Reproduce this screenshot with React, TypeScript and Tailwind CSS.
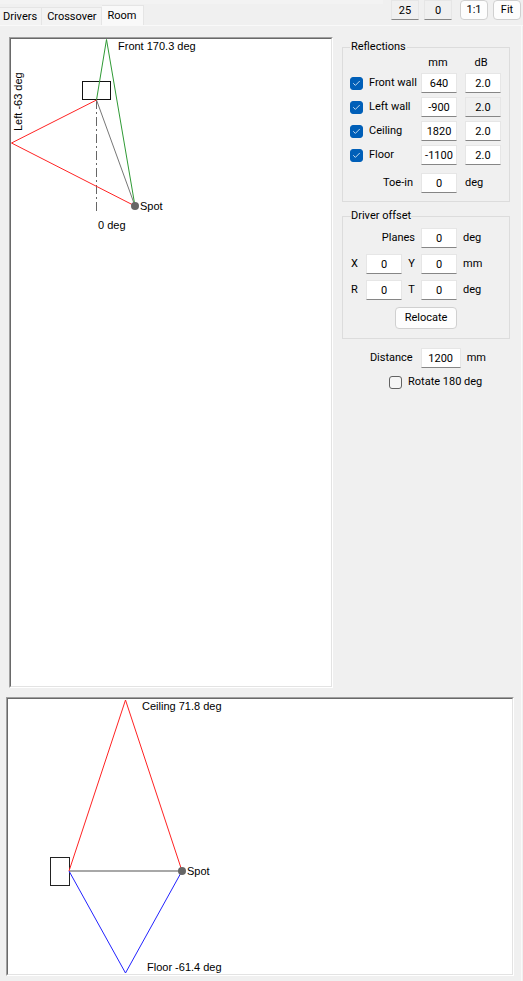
import { useState } from "react";
import { Check } from "lucide-react";
import clsx from "clsx";

type NumberFieldProps = {
  label: string;
  value: string;
  muted?: boolean;
  className?: string;
};

function NumberField({ label, value, muted, className = "w-9" }: NumberFieldProps) {
  return (
    <input
      type="text"
      aria-label={label}
      defaultValue={value}
      className={clsx(
        "h-5 border border-[#e6e6e6] border-b-[#868686] p-0 text-center outline-none",
        muted ? "bg-[#f0f0f0]" : "bg-white",
        className
      )}
    />
  );
}

function CheckField({ label, initial = false }: { label: string; initial?: boolean }) {
  const [checked, setChecked] = useState(initial);

  return (
    <label className="flex items-center gap-[6px] whitespace-nowrap">
      <span className="relative flex">
        <input
          type="checkbox"
          checked={checked}
          onChange={(e) => setChecked(e.target.checked)}
          className="size-[13px] appearance-none rounded-[3px] border border-[#626262] bg-[#f5f5f5] checked:border-[#005fb8] checked:bg-[#005fb8]"
        />
        {checked && (
          <Check className="pointer-events-none absolute inset-0 m-auto size-[9px] text-white" strokeWidth={2} />
        )}
      </span>
      {label}
    </label>
  );
}

const tabs = ["Drivers", "Crossover", "Room"];

const reflections = [
  { name: "Front wall", mm: "640", db: "2.0" },
  { name: "Left wall", mm: "-900", db: "2.0", muted: true },
  { name: "Ceiling", mm: "1820", db: "2.0" },
  { name: "Floor", mm: "-1100", db: "2.0" },
];

const canvasFrame =
  "border border-t-[#a0a0a0] border-l-[#a0a0a0] border-r-white border-b-white";
const canvasInner =
  "border border-t-[#696969] border-l-[#696969] border-r-[#e3e3e3] border-b-[#e3e3e3] bg-white";
const buttonStyle = "rounded-[4px] border border-[#d0d0d0] bg-[#fdfdfd]";

function Header() {
  return (
    <header className="flex h-[26px] items-start border-b border-[#f9f9f9]">
      <div role="tablist" className="flex h-[25px] flex-1 items-end border-t-4 border-[#f3f3f3]">
        {tabs.map((tab) => {
          const active = tab === "Room";
          return (
            <button
              key={tab}
              role="tab"
              aria-selected={active}
              className={clsx(
                "border-t border-r border-[#e5e5e5]",
                active ? "h-5 bg-[#f9f9f9] px-[6px]" : "h-[18px] bg-[#f3f3f3] pr-1 pl-[3px] not-first:pl-[5px]"
              )}
            >
              {tab}
            </button>
          );
        })}
      </div>
      <div className="ml-2 flex pr-[2px]">
        <NumberField label="Zoom" value="25" muted className="w-7" />
        <NumberField label="Offset" value="0" muted className="ml-[5px] w-7" />
        <button className={clsx(buttonStyle, "ml-2 h-5 w-7")}>1:1</button>
        <button className={clsx(buttonStyle, "ml-[5px] h-5 w-7")}>Fit</button>
      </div>
    </header>
  );
}

function TopView() {
  return (
    <div className={clsx(canvasFrame, "flex flex-1")}>
      <div className={clsx(canvasInner, "flex flex-1")}>
        <svg className="h-full min-h-[300px] w-full" fill="none" aria-label="Top view">
          <rect x="71.5" y="42.5" width="28" height="18" stroke="#111" />
          <path d="M85.5 61V173" stroke="#666" strokeDasharray="9 3 2 3" />
          <path d="M85.5 61L124 167" stroke="#777" />
          <path d="M85.5 61L95.5 0.5L124 167" stroke="#2f9a35" />
          <path d="M85.5 61L0.5 104L124 167" stroke="#f22" />
          <circle cx="124" cy="167" r="4" fill="#666" />
          <g fill="#000" className="font-['Liberation_Sans',Arial,sans-serif] text-[11px]">
            <text x="107" y="11">Front 170.3 deg</text>
            <text x="129" y="171">Spot</text>
            <text x="87" y="190">0 deg</text>
            <text transform="translate(11 92) rotate(-90)">Left -63 deg</text>
          </g>
        </svg>
      </div>
    </div>
  );
}

function SideView() {
  return (
    <div className={canvasFrame}>
      <div className={canvasInner}>
        <svg className="h-[275px] w-full" fill="none" aria-label="Side view">
          <rect x="42.5" y="158.5" width="19" height="28" stroke="#222" />
          <path d="M61 172H174" stroke="#a8a8a8" strokeWidth="2" />
          <path d="M61 172L117.5 1L174 172" stroke="#f22" />
          <path d="M61 172L117.5 274L174 172" stroke="#22f" />
          <circle cx="174" cy="172" r="4" fill="#666" />
          <g fill="#000" className="font-['Liberation_Sans',Arial,sans-serif] text-[11px]">
            <text x="134" y="11">Ceiling 71.8 deg</text>
            <text x="179" y="176">Spot</text>
            <text x="139" y="272">Floor -61.4 deg</text>
          </g>
        </svg>
      </div>
    </div>
  );
}

function Settings() {
  return (
    <aside className="w-[168px] shrink-0 pt-[2px]">
      <fieldset className="border border-[#dcdcdc] pb-[6px] pl-[7px]">
        <legend className="px-px leading-4">Reflections</legend>
        <div className="grid grid-cols-[63px_36px_36px] gap-x-2">
          <span className="col-start-2 h-4 pr-[2px] text-center leading-4">mm</span>
          <span className="h-4 pr-1 text-center leading-4">dB</span>
          {reflections.map((row) => (
            <div key={row.name} className="col-span-3 grid h-6 grid-cols-subgrid items-center">
              <CheckField label={row.name} initial />
              <NumberField label={`${row.name} distance`} value={row.mm} />
              <NumberField label={`${row.name} attenuation`} value={row.db} muted={row.muted} />
            </div>
          ))}
          <div className="col-span-3 mt-1 grid h-6 grid-cols-subgrid items-center">
            <span className="text-right">Toe-in</span>
            <NumberField label="Toe-in" value="0" />
            <span>deg</span>
          </div>
        </div>
      </fieldset>

      <fieldset className="mt-[6px] border border-[#dcdcdc] pt-px pb-[9px] pl-2">
        <legend className="leading-4">Driver offset</legend>
        <div className="grid auto-rows-[26px] grid-cols-[9px_36px_7px_36px_24px] items-center gap-x-[6px]">
          <span className="col-span-3 text-right">Planes</span>
          <NumberField label="Planes" value="0" />
          <span>deg</span>
          <span>X</span>
          <NumberField label="X" value="0" />
          <span className="text-center">Y</span>
          <NumberField label="Y" value="0" />
          <span>mm</span>
          <span>R</span>
          <NumberField label="R" value="0" />
          <span className="text-center">T</span>
          <NumberField label="T" value="0" />
          <span>deg</span>
        </div>
        <button className={clsx(buttonStyle, "mt-1 ml-11 block h-[22px] w-[62px]")}>Relocate</button>
      </fieldset>

      <div className="mt-[7px] flex h-6 items-center justify-end gap-[6px] pr-6">
        <span className="pr-[2px]">Distance</span>
        <NumberField label="Distance" value="1200" className="w-10" />
        <span>mm</span>
      </div>
      <div className="flex h-6 items-center pl-[47px]">
        <CheckField label="Rotate 180 deg" />
      </div>
    </aside>
  );
}

export default function App() {
  return (
    <div className="flex min-h-screen flex-col bg-[#f0f0f0] font-[Roboto,'Liberation_Sans',sans-serif] text-[11px] leading-4 text-black">
      <Header />
      <main className="mr-px flex flex-1 flex-col border-r border-[#fafafa] pt-[11px] pb-[5px]">
        <div className="flex flex-1 gap-[9px] pr-[11px] pl-[9px]">
          <TopView />
          <Settings />
        </div>
        <div className="mt-[9px] pr-[7px] pl-[6px]">
          <SideView />
        </div>
      </main>
    </div>
  );
}
